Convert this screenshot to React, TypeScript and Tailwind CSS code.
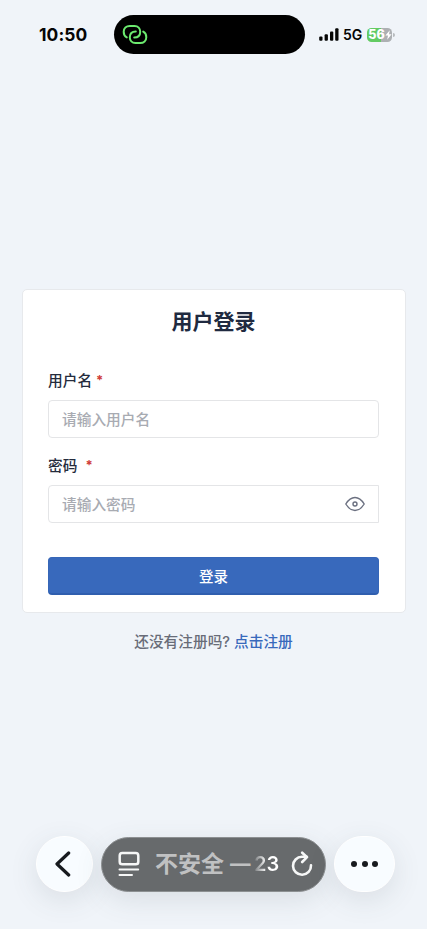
import type { ReactNode } from "react";
import { useState } from "react";

const HotspotIcon = () => (
  <svg width="26" height="22" viewBox="0 0 26 22" fill="none" stroke="#6cea6f" strokeWidth="2" strokeLinecap="round">
    <path d="M4.8 13.4C2.8 12.4 1.7 10.2 1.7 7.8C1.7 4.3 4.3 2 7.8 2H12.6C16 2 18.2 4.5 18.2 7.8C18.2 11.3 16 13.6 12.2 13.6" />
    <path d="M21.2 7.6C23.2 8.6 24.3 10.8 24.3 13.2C24.3 16.7 21.7 19 18.2 19H13.4C10 19 7.8 16.5 7.8 13.2C7.8 9.7 10 7.4 13.8 7.4" />
  </svg>
);

const SignalIcon = () => (
  <svg width="20" height="13" viewBox="0 0 20 13" fill="#050505">
    <rect x="0.2" y="8.4" width="3.3" height="4.3" rx="1" />
    <rect x="5.6" y="6.2" width="3.3" height="6.5" rx="1" />
    <rect x="11" y="3.4" width="3.3" height="9.3" rx="1" />
    <rect x="16.2" y="0.3" width="3.3" height="12.4" rx="1" />
  </svg>
);

const Battery = () => (
  <div className="flex items-center gap-px">
    <div className="flex h-[14px] w-[25px] items-center justify-center rounded-[4.5px] bg-[linear-gradient(90deg,#63cb63_57%,#adb0b3_57%)] pl-px text-white">
      <span className="text-[12.5px] leading-[14px] font-extrabold">56</span>
      <svg width="7" height="10" viewBox="0 0 7 10" fill="currentColor">
        <path d="M4.8 0.3L0.4 5.5H3L2.2 9.7L6.6 4.3H4Z" />
      </svg>
    </div>
    <div className="h-1 w-[2px] rounded-r-full bg-[#b8bbbe]" />
  </div>
);

const StatusBar = () => (
  <header className="flex h-[69px] items-center pl-[39px] text-[#050505]">
    <span className="w-[75px] pt-px text-[17.4px] font-bold tracking-[0.1px]">10:50</span>
    <div className="flex h-[39px] w-[191px] items-center rounded-full bg-black pl-2">
      <HotspotIcon />
    </div>
    <div className="flex items-center pl-[14px]">
      <SignalIcon />
      <span className="w-[24px] pl-1 text-[14px] font-semibold">5G</span>
      <div className="pl-1">
        <Battery />
      </div>
    </div>
  </header>
);

const EyeIcon = () => (
  <svg width="20" height="16" viewBox="0 0 20 16" fill="none" stroke="#6b7080" strokeWidth="1.4">
    <path d="M0.8 8C3.6 3.5 6.5 1.5 10 1.5S16.4 3.5 19.2 8C16.4 12.5 13.5 14.5 10 14.5S3.6 12.5 0.8 8Z" strokeLinejoin="round" />
    <circle cx="10" cy="8" r="2" />
  </svg>
);

type FieldProps = {
  label: string;
  placeholder: string;
  type?: string;
  labelClass?: string;
  inputClass?: string;
  children?: ReactNode;
};

const Field = ({ label, placeholder, type = "text", labelClass = "", inputClass = "", children }: FieldProps) => (
  <label className="block">
    <span className={`flex h-[22px] items-center text-[14.7px] font-medium text-[#252c3d] ${labelClass}`}>
      {label}
      <span className="text-[13px] font-bold text-[#cf3b38]">*</span>
    </span>
    <span className={`mt-[8px] flex h-[38px] items-center border border-[#e4e5e7] bg-white pr-[13px] pl-[13px] ${inputClass}`}>
      <input
        type={type}
        placeholder={placeholder}
        className="min-w-0 flex-1 bg-transparent pt-[2px] text-[14.7px] font-medium text-[#252c3d] outline-none placeholder:text-[#a8abb2]"
      />
      {children}
    </span>
  </label>
);

const LoginCard = () => {
  const [visible, setVisible] = useState(false);

  return (
    <form
      className="ml-[22px] h-[324px] w-[384px] rounded-[5px] border border-[#e7e9ec] bg-white pt-[17px] pr-[26px] pl-[25px]"
      onSubmit={(e) => e.preventDefault()}
    >
      <h1 className="text-center text-[21px] leading-[29px] font-bold text-[#202a40]">用户登录</h1>
      <div className="mt-[34px]">
        <Field label="用户名" placeholder="请输入用户名" labelClass="gap-[4px]" inputClass="rounded-[4px]" />
      </div>
      <div className="mt-[17px]">
        <Field
          label="密码"
          placeholder="请输入密码"
          type={visible ? "text" : "password"}
          labelClass="gap-[8px]"
          inputClass="rounded-l-[4px]"
        >
          <button type="button" aria-label="密码" onClick={() => setVisible(!visible)}>
            <EyeIcon />
          </button>
        </Field>
      </div>
      <button
        type="submit"
        className="mt-[34px] block h-[38px] w-full rounded-[4px] border border-[#3666b7] border-b-2 border-b-[#2f5eae] bg-[#3869bc] pt-[2px] text-[14.5px] font-medium text-white"
      >
        登录
      </button>
    </form>
  );
};

const ReaderIcon = () => (
  <svg width="22" height="26" viewBox="0 0 22 26" fill="none" stroke="#f6f7f7" strokeWidth="2.5" strokeLinecap="round">
    <rect x="1.7" y="2.1" width="18.6" height="11.2" rx="2.6" />
    <path d="M1.5 18.5H20.2M1.5 24H14" strokeWidth="2" />
  </svg>
);

const ReloadIcon = () => (
  <svg width="22" height="26" viewBox="0 0 22 26" fill="none" stroke="#f6f7f7" strokeWidth="2.6" strokeLinecap="round" strokeLinejoin="round">
    <path d="M20 14.4A9 9 0 1 1 11 5.8H15.6" />
    <path d="M11.2 1.7L16 6.1L11.2 11" />
  </svg>
);

const BrowserBar = () => (
  <nav className="flex items-center pl-9">
    <button
      aria-label="返回"
      className="flex h-[56px] w-[57px] items-center justify-center rounded-full border border-white bg-[#f8fcff] pr-[4px] shadow-[0_8px_28px_rgba(70,85,95,0.13)]"
    >
      <svg width="16" height="26" viewBox="0 0 16 26" fill="none" stroke="#171a1e" strokeWidth="3.2" strokeLinecap="round" strokeLinejoin="round">
        <path d="M13.7 2L2 13L13.7 24" />
      </svg>
    </button>
    <div className="ml-2 flex h-[55px] w-[225px] items-center rounded-full border border-[#8d9092] bg-[#676a6c] pl-[16px] shadow-[0_8px_28px_rgba(70,85,95,0.13)]">
      <ReaderIcon />
      <span className="ml-[15px] flex w-[97px] items-center pt-px text-[23px] font-bold whitespace-nowrap text-[#c0c1c2]">
        不安全 <span className="ml-[6px] text-[20.5px]">—</span>
      </span>
      <span className="ml-[2px] w-[25px] bg-gradient-to-r from-[#777a7c] via-white via-50% to-white bg-clip-text text-[20px] font-semibold text-transparent">
        23
      </span>
      <span className="ml-[12px]">
        <ReloadIcon />
      </span>
    </div>
    <button
      aria-label="更多"
      className="ml-2 flex h-[56px] w-[61px] items-center justify-center gap-[4.5px] rounded-full border border-white bg-[#f8fcff] shadow-[0_8px_28px_rgba(70,85,95,0.13)]"
    >
      <i className="size-[6px] rounded-full bg-[#171a1e]" />
      <i className="size-[6px] rounded-full bg-[#171a1e]" />
      <i className="size-[6px] rounded-full bg-[#171a1e]" />
    </button>
  </nav>
);

export default function App() {
  return (
    <div className="flex h-[929px] w-[427px] flex-col overflow-hidden bg-[#f0f4f9] font-['Inter','Noto_Sans_CJK_SC',sans-serif]">
      <StatusBar />
      <main className="h-[767px] pt-[220px]">
        <LoginCard />
        <p className="mt-[17px] text-center text-[14.7px] leading-6 font-medium text-[#686c78]">
          还没有注册吗? <a href="#" className="text-[#3869bc]">点击注册</a>
        </p>
      </main>
      <BrowserBar />
    </div>
  );
}
